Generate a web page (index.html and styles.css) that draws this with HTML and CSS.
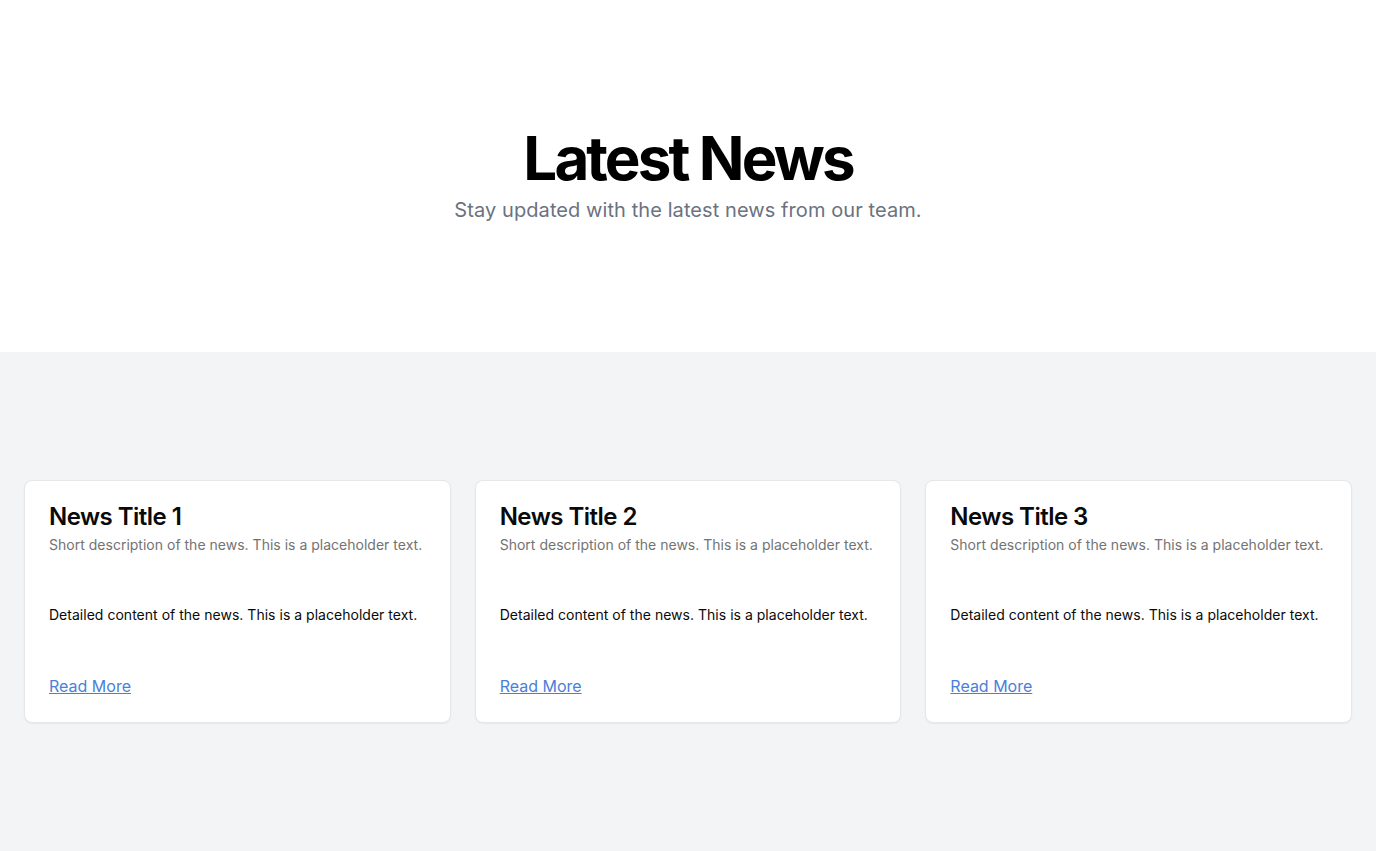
FILE: index.html
```html
<!DOCTYPE html>
<html lang="en">
<head>
<meta charset="utf-8">
<title>Latest News</title>
<link rel="stylesheet" href="styles.css">
</head>
<body>
<section class="hero">
  <h1 class="hero-title">Latest News</h1>
  <p class="hero-sub">Stay updated with the latest news from our team.</p>
</section>
<section class="news">
  <div class="grid">
    <div class="card">
      <div class="card-header">
        <h3 class="card-title">News Title 1</h3>
        <p class="card-desc">Short description of the news. This is a placeholder text.</p>
      </div>
      <div class="card-content"><p>Detailed content of the news. This is a placeholder text.</p></div>
      <div class="card-footer"><a class="link" href="#">Read More</a></div>
    </div>
    <div class="card">
      <div class="card-header">
        <h3 class="card-title">News Title 2</h3>
        <p class="card-desc">Short description of the news. This is a placeholder text.</p>
      </div>
      <div class="card-content"><p>Detailed content of the news. This is a placeholder text.</p></div>
      <div class="card-footer"><a class="link" href="#">Read More</a></div>
    </div>
    <div class="card">
      <div class="card-header">
        <h3 class="card-title">News Title 3</h3>
        <p class="card-desc">Short description of the news. This is a placeholder text.</p>
      </div>
      <div class="card-content"><p>Detailed content of the news. This is a placeholder text.</p></div>
      <div class="card-footer"><a class="link" href="#">Read More</a></div>
    </div>
  </div>
</section>
</body>
</html>
```

FILE: styles.css
```css
* { box-sizing: border-box; }
html, body { margin: 0; padding: 0; }
body {
  font-family: Inter, "Noto Sans", sans-serif;
  color: #0a0a0a;
  background: #ffffff;
}
.hero {
  padding: 128px 24px;
  display: flex;
  flex-direction: column;
  align-items: center;
  gap: 8px;
  text-align: center;
}
.hero-title {
  margin: 0;
  font-size: 60px;
  line-height: 60px;
  font-weight: 700;
  letter-spacing: -0.048em;
  color: #000;
}
.hero-sub {
  margin: 0;
  font-size: 20px;
  line-height: 28px;
  letter-spacing: 0.08px;
  color: #6b7280;
}
.news {
  background: #f3f4f6;
  padding: 128px 24px;
}
.grid {
  display: grid;
  grid-template-columns: repeat(3, 1fr);
  gap: 24px;
}
.card {
  background: #fff;
  border: 1px solid #e5e7eb;
  border-radius: 8px;
  box-shadow: 0 1px 2px rgba(0,0,0,0.05);
}
.card-header {
  padding: 24px;
  display: flex;
  flex-direction: column;
  gap: 6px;
}
.card-title {
  margin: 0;
  font-size: 24px;
  line-height: 24px;
  font-weight: 600;
  letter-spacing: -0.022em;
}
.card-desc {
  margin: 0;
  font-size: 14px;
  line-height: 20px;
  letter-spacing: 0.01px;
  color: #737373;
}
.card-content {
  padding: 24px;
}
.card-content p {
  margin: 0;
  font-size: 14px;
  line-height: 23.4px;
  letter-spacing: 0.02px;
}
.card-footer {
  padding: 24px;
  display: flex;
  align-items: center;
}
.link {
  font-size: 16px;
  line-height: 24px;
  color: #4a80d8;
  text-decoration: underline;
}
```
